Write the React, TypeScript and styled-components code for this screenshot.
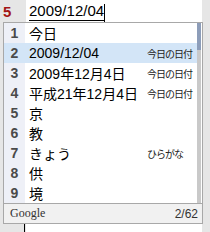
import styled, { createGlobalStyle } from 'styled-components'

const GlobalStyle = createGlobalStyle`
  html, body {
    margin: 0;
    padding: 0;
    background: #e6e6e6;
  }
  body {
    font-family: 'Liberation Sans', 'Noto Sans CJK JP', sans-serif;
  }
`

const Editor = styled.div`
  position: relative;
  width: 210px;
  height: 232px;
  overflow: hidden;
  display: flex;
  background: #e6e6e6;
`

const Gutter = styled.div`
  width: 26px;
  display: flex;
  flex-direction: column;
`

const LineNo = styled.div`
  height: 22px;
  line-height: 24px;
  padding-left: 3px;
  font-size: 15px;
  font-weight: bold;
  color: #a31515;
`

const GutterRest = styled.div`
  flex: 1;
  display: flex;
  justify-content: flex-end;
  align-items: flex-end;
  padding-right: 1px;
`

const Caret = styled.div<{ h: number }>`
  width: 1px;
  height: ${({ h }) => h}px;
  background: #000;
`

const TextArea = styled.div`
  width: 176px;
  background: #fff;
`

const Line = styled.div`
  height: 22px;
  display: flex;
  align-items: flex-end;
  padding-left: 3px;
`

const Composing = styled.span`
  font-size: 15px;
  line-height: 18px;
  color: #000;
  border-bottom: 1px solid #000;
  margin-bottom: 1px;
`

const Popup = styled.div`
  position: absolute;
  left: 3px;
  top: 22px;
  width: 200px;
  box-sizing: border-box;
  border: 1px solid #a8a8a8;
  background: #fff;
`

const Body = styled.div`
  display: flex;
`

const List = styled.div`
  flex: 1;
`

const Row = styled.div<{ selected?: boolean }>`
  display: grid;
  grid-template-columns: 21px 1fr 50px;
  height: 20px;
  align-items: center;
  background: ${({ selected }) => (selected ? '#d3e5f7' : '#fff')};
`

const Num = styled.div<{ selected?: boolean }>`
  height: 100%;
  line-height: 20px;
  text-align: center;
  font-size: 14px;
  font-weight: bold;
  color: #4a4a4a;
  background: ${({ selected }) => (selected ? '#d3e5f7' : '#eef0f7')};
`

const Candidate = styled.div`
  padding-left: 4px;
  font-size: 14px;
  color: #000;
  white-space: nowrap;
`

const Note = styled.div`
  font-family: 'Noto Sans CJK JP', sans-serif;
  font-size: 10px;
  letter-spacing: -1px;
  color: #222;
  white-space: nowrap;
`

const Scrollbar = styled.div`
  width: 4px;
  margin-right: 1px;
  display: flex;
  flex-direction: column;
`

const Thumb = styled.div`
  height: 27px;
  background: #8d9db9;
`

const Track = styled.div`
  flex: 1;
  background: #c9c9c9;
`

const Footer = styled.div`
  height: 19px;
  border-top: 1px solid #a8a8a8;
  background: #f1f1f1;
  display: flex;
  justify-content: space-between;
  align-items: center;
  padding: 0 4px 0 6px;
`

const Brand = styled.span`
  font-family: 'Liberation Serif', serif;
  font-size: 12px;
  color: #333;
`

const Count = styled.span`
  font-size: 12px;
  color: #333;
`

const candidates = [
  { text: '今日' },
  { text: '2009/12/04', note: '今日の日付' },
  { text: '2009年12月4日', note: '今日の日付' },
  { text: '平成21年12月4日', note: '今日の日付' },
  { text: '京' },
  { text: '教' },
  { text: 'きょう', note: 'ひらがな' },
  { text: '供' },
  { text: '境' },
]

export default function App() {
  return (
    <>
      <GlobalStyle />
      <Editor>
        <Gutter>
          <LineNo>5</LineNo>
          <GutterRest>
            <Caret h={8} />
          </GutterRest>
        </Gutter>
        <TextArea>
          <Line>
            <Composing>2009/12/04</Composing>
            <Caret h={18} />
          </Line>
        </TextArea>

        <Popup>
          <Body>
            <List>
              {candidates.map((c, i) => (
                <Row key={i} selected={i === 1}>
                  <Num selected={i === 1}>{i + 1}</Num>
                  <Candidate>{c.text}</Candidate>
                  <Note>{c.note}</Note>
                </Row>
              ))}
            </List>
            <Scrollbar>
              <Thumb />
              <Track />
            </Scrollbar>
          </Body>
          <Footer>
            <Brand>Google</Brand>
            <Count>2/62</Count>
          </Footer>
        </Popup>
      </Editor>
    </>
  )
}
